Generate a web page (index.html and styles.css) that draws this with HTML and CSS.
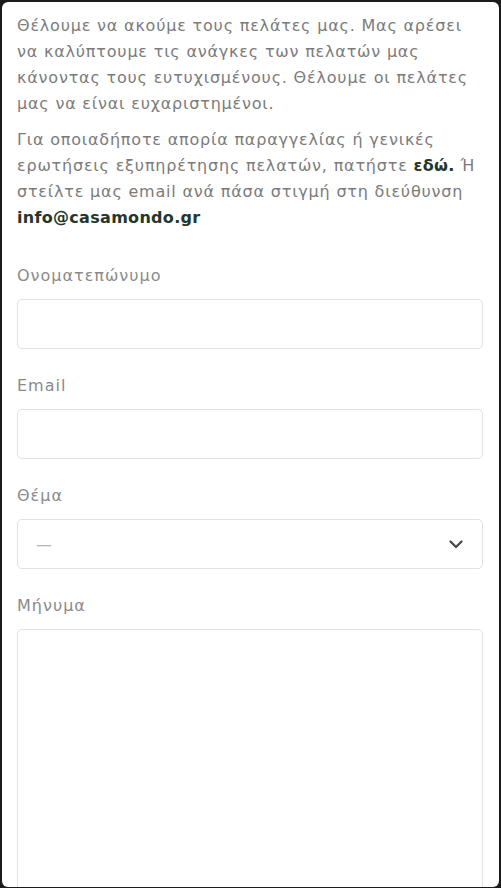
FILE: index.html
```html
<!DOCTYPE html>
<html lang="el">
<head>
    <meta charset="UTF-8">
    <meta name="viewport" content="width=device-width, initial-scale=1.0">
    <title>Επικοινωνία – Casamondo</title>
    <link rel="stylesheet" href="styles.css">
</head>
<body>
    <div class="page">
        <div class="contact-intro">
            <p>Θέλουμε να ακούμε τους πελάτες μας. Μας αρέσει να καλύπτουμε τις ανάγκες των πελατών μας κάνοντας τους ευτυχισμένους. Θέλουμε οι πελάτες μας να είναι ευχαριστημένοι.</p>
            <p>Για οποιαδήποτε απορία παραγγελίας ή γενικές ερωτήσεις εξυπηρέτησης πελατών, πατήστε <a href="#">εδώ.</a> Ή στείλτε μας email ανά πάσα στιγμή στη διεύθυνση <a href="#">info@casamondo.gr</a></p>
        </div>

        <form class="contact-form">
            <div class="form-item">
                <label for="field-name">Ονοματεπώνυμο</label>
                <input id="field-name" type="text">
            </div>
            <div class="form-item">
                <label for="field-email">Email</label>
                <input id="field-email" type="email">
            </div>
            <div class="form-item">
                <label for="field-subject">Θέμα</label>
                <select id="field-subject">
                    <option value="">—</option>
                    <option value="order">Παραγγελία</option>
                    <option value="other">Άλλο</option>
                </select>
            </div>
            <div class="form-item">
                <label for="field-message">Μήνυμα</label>
                <textarea id="field-message"></textarea>
            </div>
        </form>
    </div>
</body>
</html>
```

FILE: styles.css
```css
:root {
    --text-color: #7b7b7b;
    --label-color: #8a8a8a;
    --strong-color: #25362b;
    --border-color: #e2e2e2;
}
html, body {
    margin: 0;
    background-color: #1b1b1b;
}
body {
    font-family: 'DejaVu Sans', 'Noto Sans', sans-serif;
    color: var(--text-color);
}
.page {
    margin: 2px 2px 0;
    height: 885px;
    overflow: hidden;
    background-color: #fff;
    border-radius: 6px;
    padding: 0 16px 0 15px;
}
.contact-intro {
    padding-top: 11px;
    padding-right: 2px;
}
.contact-intro p {
    margin: 0 0 10px;
    font-size: 16px;
    line-height: 26px;
    letter-spacing: 0.8px;
}
.contact-intro a {
    color: var(--strong-color);
    font-weight: bold;
    letter-spacing: 0.3px;
    text-decoration: none;
}
.contact-form {
    margin-top: 33px;
}
.form-item {
    display: flex;
    flex-direction: column;
    margin-bottom: 25px;
}
label {
    font-size: 16px;
    line-height: 24px;
    margin-bottom: 11px;
    color: var(--label-color);
    letter-spacing: 1px;
}
input, select, textarea {
    box-sizing: border-box;
    width: 100%;
    height: 50px;
    border: 1px solid var(--border-color);
    border-radius: 5px;
    background-color: #fff;
    font-family: inherit;
    font-size: 16px;
    padding: 0 18px;
}
select {
    appearance: none;
    color: #b5b5b5;
    background-image: url("data:image/svg+xml,%3Csvg xmlns='http://www.w3.org/2000/svg' width='14' height='9' viewBox='0 0 14 9'%3E%3Cpath d='M1.5 1.5l5.5 5.5 5.5-5.5' fill='none' stroke='%23444' stroke-width='2.2' stroke-linecap='round' stroke-linejoin='round'/%3E%3C/svg%3E");
    background-repeat: no-repeat;
    background-position: right 19px center;
}
textarea {
    height: 320px;
    resize: none;
    padding: 14px 18px;
}
```
